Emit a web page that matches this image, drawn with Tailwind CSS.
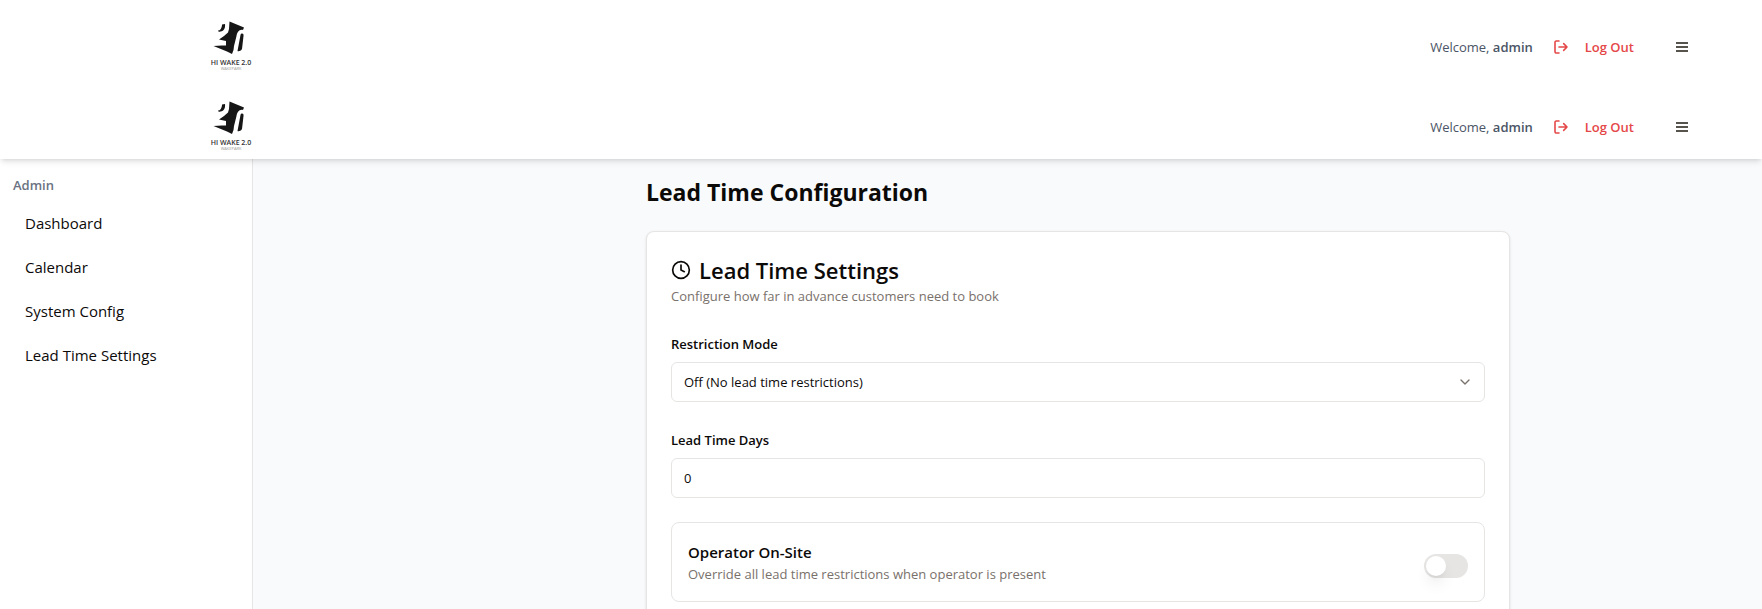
<!DOCTYPE html>
<html lang="en">
<head>
<meta charset="utf-8">
<meta name="viewport" content="width=device-width, initial-scale=1">
<title>Lead Time Configuration</title>
<script src="https://cdn.jsdelivr.net/npm/@tailwindcss/browser@4"></script>
</head>
<body class="min-h-screen bg-gray-50 font-['Open_Sans','Noto_Sans',sans-serif] text-[13px] leading-5 text-stone-950">
<svg class="hidden" aria-hidden="true">
  <symbol id="logo" viewBox="0 0 80 80">
    <g fill="#161616">
      <path d="M39.500 21.500 L54 27.500 L53 30 C49 29 47 33 46.500 36 L44 46 L43.500 50 L42 54 L37 51.500 L23.500 46 L32 45.500 L36 45.500 L36 41 L29 39.500 L34 36 L38 32.500 L39 29 Z"/>
      <path d="M28 30.500 C30 31 32 28 32 24.500 L35 24 C35.500 28 34 31 30.500 31.500 C28.500 32 28 31.500 28 30.500 Z"/>
      <path d="M50.500 35 C51 33 54 33 53.500 36 L52 49 C51 51 48.500 51.500 47.500 51 Z"/>
    </g>
    <text x="41" y="65" text-anchor="middle" font-size="7" font-weight="600" fill="#333">HI WAKE 2.0</text>
    <text x="41" y="70" text-anchor="middle" font-size="4" fill="#999">WAKEPARK</text>
  </symbol>
  <symbol id="logout" viewBox="0 0 24 24">
    <path d="M9 21H5a2 2 0 0 1-2-2V5a2 2 0 0 1 2-2h4M16 17l5-5-5-5M21 12H9" fill="none" stroke="currentColor" stroke-width="2.4" stroke-linecap="round" stroke-linejoin="round"/>
  </symbol>
  <symbol id="menu" viewBox="0 0 16 16">
    <path d="M2 4h12M2 8h12M2 12h12" fill="none" stroke="currentColor" stroke-width="2"/>
  </symbol>
</svg>
<div class="relative bg-white shadow-md">
  <header class="flex h-20 items-center justify-between pr-[72px] pl-[190px]">
    <a href="#" aria-label="Hi Wake 2.0"><svg class="size-20"><use href="#logo"/></svg></a>
    <div class="flex items-center pt-[14px]">
      <span class="text-gray-600">Welcome, <b class="font-semibold">admin</b></span>
      <button class="ml-5 flex items-center gap-4 font-semibold text-[#e54848]"><svg class="size-4"><use href="#logout"/></svg>Log Out</button>
      <button class="ml-10 text-stone-600" aria-label="Menu"><svg class="size-4"><use href="#menu"/></svg></button>
    </div>
  </header>
  <header class="flex h-[79px] items-center justify-between pr-[72px] pl-[190px]">
    <a href="#" aria-label="Hi Wake 2.0"><svg class="size-20"><use href="#logo"/></svg></a>
    <div class="flex items-center pt-[14px]">
      <span class="text-gray-600">Welcome, <b class="font-semibold">admin</b></span>
      <button class="ml-5 flex items-center gap-4 font-semibold text-[#e54848]"><svg class="size-4"><use href="#logout"/></svg>Log Out</button>
      <button class="ml-10 text-stone-600" aria-label="Menu"><svg class="size-4"><use href="#menu"/></svg></button>
    </div>
  </header>
</div>
<div class="flex h-[450px] overflow-hidden">
  <aside class="w-[253px] shrink-0 border-r border-stone-200 bg-white px-[13px] pt-4">
    <h2 class="font-semibold text-gray-500">Admin</h2>
    <nav class="mt-2 flex flex-col gap-1 text-[15px] leading-6">
      <a href="#" class="px-3 py-2">Dashboard</a>
      <a href="#" class="px-3 py-2">Calendar</a>
      <a href="#" class="px-3 py-2">System Config</a>
      <a href="#" class="px-3 py-2">Lead Time Settings</a>
    </nav>
  </aside>
  <main class="flex-1 pt-[17px] pl-[141px]">
    <div class="mx-auto max-w-4xl px-4">
      <h1 class="text-[23px] leading-8 font-bold">Lead Time Configuration</h1>
      <section class="mt-[23px] rounded-lg border border-stone-200 bg-white p-6 shadow-sm">
        <h2 class="flex items-center gap-2 text-[22px] leading-7 font-semibold">
          <svg class="size-5" viewBox="0 0 24 24" fill="none" stroke="currentColor" stroke-width="2" stroke-linecap="round" stroke-linejoin="round"><circle cx="12" cy="12" r="10"/><path d="M12 6v6l4 2"/></svg>
          Lead Time Settings
        </h2>
        <p class="mt-[2px] text-stone-500">Configure how far in advance customers need to book</p>
        <div class="mt-7 flex flex-col gap-2">
          <label for="mode" class="font-semibold">Restriction Mode</label>
          <div class="grid items-center">
            <select id="mode" class="col-start-1 row-start-1 h-10 appearance-none rounded-md border border-stone-200 bg-white px-3"><option>Off (No lead time restrictions)</option></select>
            <svg class="pointer-events-none col-start-1 row-start-1 mr-3 size-4 justify-self-end text-stone-500" viewBox="0 0 24 24" fill="none" stroke="currentColor" stroke-width="2" stroke-linecap="round" stroke-linejoin="round"><path d="m6 9 6 6 6-6"/></svg>
          </div>
        </div>
        <div class="mt-7 flex flex-col gap-2">
          <label for="days" class="font-semibold">Lead Time Days</label>
          <input id="days" type="text" inputmode="numeric" value="0" class="h-10 rounded-md border border-stone-200 px-3">
        </div>
        <div class="mt-6 flex h-20 items-center justify-between rounded-lg border border-stone-200 px-4">
          <div>
            <label for="onsite" class="block text-[15px] leading-6 font-semibold">Operator On-Site</label>
            <p class="text-stone-500">Override all lead time restrictions when operator is present</p>
          </div>
          <input id="onsite" type="checkbox" role="switch" class="mt-2 h-6 w-11 appearance-none rounded-full bg-stone-200 p-[2px] before:block before:size-5 before:rounded-full before:bg-white before:shadow-lg checked:bg-stone-900 checked:before:ml-5">
        </div>
      </section>
    </div>
  </main>
</div>
</body>
</html>
